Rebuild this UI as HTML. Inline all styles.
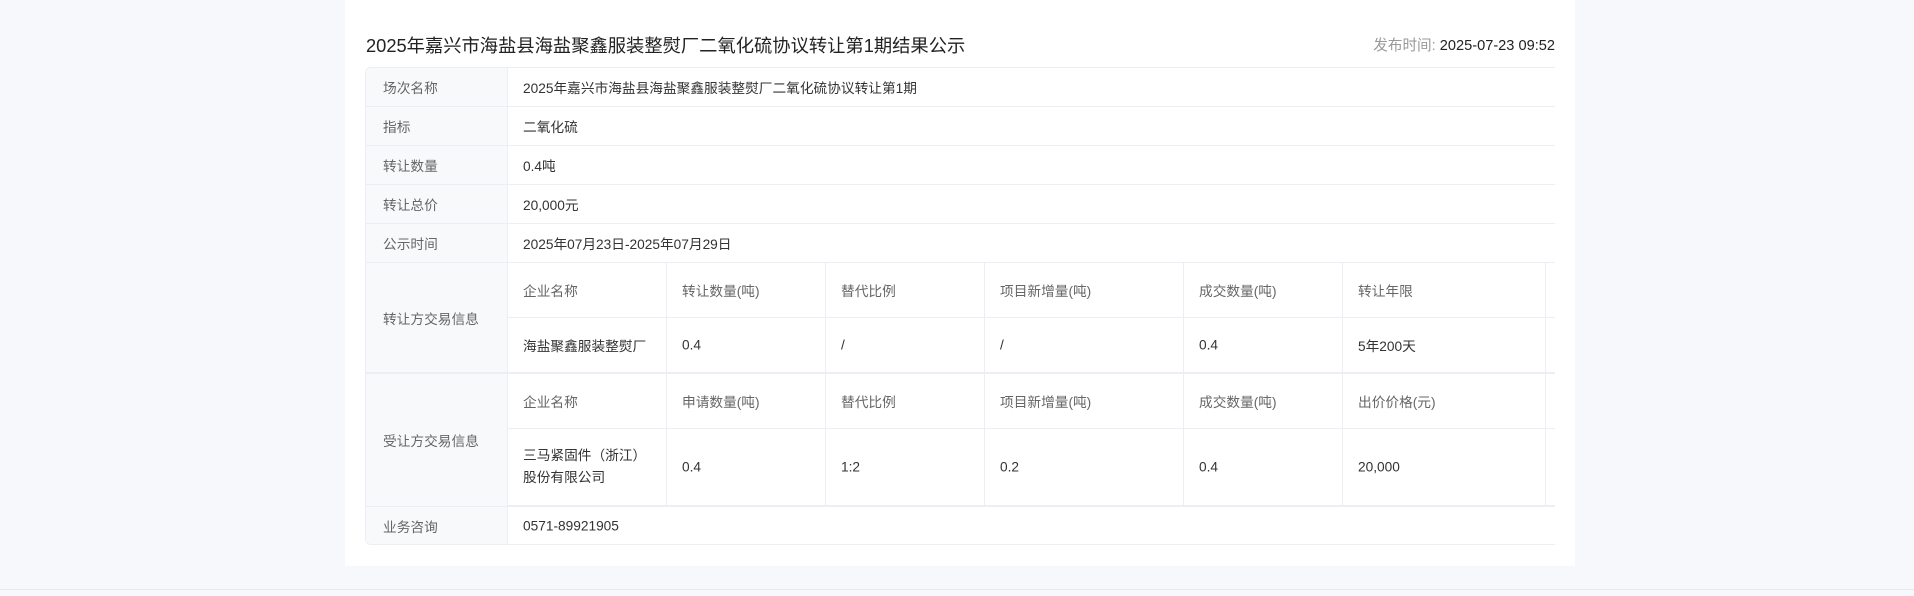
<!DOCTYPE html>
<html><head><meta charset="utf-8"><style>
*{margin:0;padding:0;box-sizing:border-box}
body{width:1914px;height:596px;background:#f7f8fb;font-family:"Liberation Sans","Noto Sans CJK SC",sans-serif;position:relative;overflow:hidden}
.panel{position:absolute;left:345px;top:0;width:1230px;height:566px;background:#fff}
.bl{position:absolute;left:0;top:589px;width:1914px;height:1px;background:#e6e8ec}
.t{position:absolute;white-space:nowrap}
.title{left:366px;top:32px;font-size:18.3px;color:#222}
.date{right:359px;top:34px;font-size:14.6px;color:#222}
.date span{color:#999}
.tbl{position:absolute;left:365px;top:67px;width:1190px;height:478px;border:1px solid #ebeef5;border-right:none;border-radius:6px 0 0 6px;overflow:hidden}
.lab{position:absolute;left:0;width:142px;background:#f8f9fb;border-right:1px solid #ebeef5}
.h{position:absolute;height:1px;background:#ebeef5}
.v{position:absolute;width:1px;background:#ebeef5}
.c{position:absolute;font-size:13.7px;color:#333;white-space:nowrap;transform:translateY(-50%)}
.g{color:#666}
</style></head><body>
<div class="panel"></div>
<div class="bl"></div>
<div class="t title">2025年嘉兴市海盐县海盐聚鑫服装整熨厂二氧化硫协议转让第1期结果公示</div>
<div class="t date"><span>发布时间: </span>2025-07-23 09:52</div>
<div class="tbl">
<div class="lab" style="top:0;height:478px"></div>
<div class="h" style="left:0;width:1190px;top:38px"></div>
<div class="h" style="left:0;width:1190px;top:77px"></div>
<div class="h" style="left:0;width:1190px;top:116px"></div>
<div class="h" style="left:0;width:1190px;top:155px"></div>
<div class="h" style="left:0;width:1190px;top:194px"></div>
<div class="h" style="left:142px;width:1048px;top:249px"></div>
<div class="h" style="left:0;width:1190px;top:304px;height:2px;background:#ebeef5"></div>
<div class="h" style="left:0;width:142px;top:305px"></div>
<div class="h" style="left:142px;width:1048px;top:360px"></div>
<div class="h" style="left:142px;width:1048px;top:437px;height:2px"></div>
<div class="h" style="left:0;width:142px;top:438px"></div>
<div class="v" style="left:300px;top:195px;height:243px"></div>
<div class="v" style="left:459px;top:195px;height:243px"></div>
<div class="v" style="left:618px;top:195px;height:243px"></div>
<div class="v" style="left:817px;top:195px;height:243px"></div>
<div class="v" style="left:976px;top:195px;height:243px"></div>
<div class="v" style="left:1179px;top:195px;height:243px"></div>

<div class="c g" style="left:17px;top:19px">场次名称</div>
<div class="c" style="left:157px;top:19px">2025年嘉兴市海盐县海盐聚鑫服装整熨厂二氧化硫协议转让第1期</div>
<div class="c g" style="left:17px;top:58px">指标</div>
<div class="c" style="left:157px;top:58px">二氧化硫</div>
<div class="c g" style="left:17px;top:97px">转让数量</div>
<div class="c" style="left:157px;top:97px">0.4吨</div>
<div class="c g" style="left:17px;top:136px">转让总价</div>
<div class="c" style="left:157px;top:136px">20,000元</div>
<div class="c g" style="left:17px;top:175px">公示时间</div>
<div class="c" style="left:157px;top:175px">2025年07月23日-2025年07月29日</div>

<div class="c g" style="left:17px;top:250px">转让方交易信息</div>
<div class="c g" style="left:157px;top:222px">企业名称</div>
<div class="c g" style="left:316px;top:222px">转让数量(吨)</div>
<div class="c g" style="left:475px;top:222px">替代比例</div>
<div class="c g" style="left:634px;top:222px">项目新增量(吨)</div>
<div class="c g" style="left:833px;top:222px">成交数量(吨)</div>
<div class="c g" style="left:992px;top:222px">转让年限</div>
<div class="c" style="left:157px;top:277px">海盐聚鑫服装整熨厂</div>
<div class="c" style="left:316px;top:277px">0.4</div>
<div class="c" style="left:475px;top:277px">/</div>
<div class="c" style="left:634px;top:277px">/</div>
<div class="c" style="left:833px;top:277px">0.4</div>
<div class="c" style="left:992px;top:277px">5年200天</div>

<div class="c g" style="left:17px;top:372px">受让方交易信息</div>
<div class="c g" style="left:157px;top:333px">企业名称</div>
<div class="c g" style="left:316px;top:333px">申请数量(吨)</div>
<div class="c g" style="left:475px;top:333px">替代比例</div>
<div class="c g" style="left:634px;top:333px">项目新增量(吨)</div>
<div class="c g" style="left:833px;top:333px">成交数量(吨)</div>
<div class="c g" style="left:992px;top:333px">出价价格(元)</div>
<div class="c" style="left:157px;top:399px;line-height:22px">三马紧固件（浙江）<br>股份有限公司</div>
<div class="c" style="left:316px;top:399px">0.4</div>
<div class="c" style="left:475px;top:399px">1:2</div>
<div class="c" style="left:634px;top:399px">0.2</div>
<div class="c" style="left:833px;top:399px">0.4</div>
<div class="c" style="left:992px;top:399px">20,000</div>

<div class="c g" style="left:17px;top:458px">业务咨询</div>
<div class="c" style="left:157px;top:458px">0571-89921905</div>
</div>
</body></html>
